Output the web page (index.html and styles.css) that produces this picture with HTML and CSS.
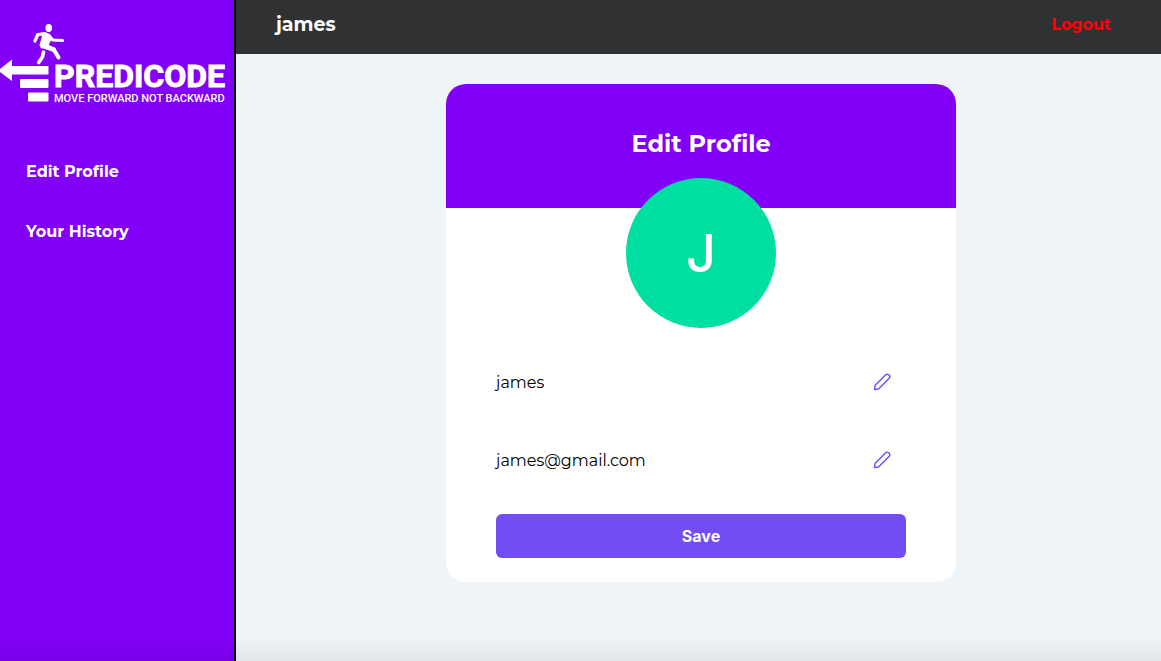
FILE: index.html
```html
<!DOCTYPE html>
<html lang="en">
<head>
<meta charset="utf-8">
<meta name="viewport" content="width=device-width, initial-scale=1">
<title>Edit Profile - Predicode</title>
<link rel="stylesheet" href="styles.css">
</head>
<body>
<div class="app">
  <aside class="sidebar">
    <svg class="logo" viewBox="0 0 234 110" role="img" aria-label="Predicode, move forward not backward">
      <g fill="#fff">
        <ellipse cx="48.700" cy="28" rx="3.300" ry="4"/>
        <path d="M-2 70.500 12 59.500V66H48.500V74.500H12V81Z"/>
        <rect x="20" y="79" width="28.500" height="9" rx="1"/>
        <rect x="28" y="92.500" width="20.500" height="9" rx="1"/>
        <path d="M39 33 45 32 50.500 34.500 52.500 38 49 44 50 47 41 48.500 39.500 45 42 36Z"/>
      </g>
      <g fill="none" stroke="#fff" stroke-linecap="round" stroke-linejoin="round">
        <path stroke-width="3.200" d="M43 34 37.800 34.500 34.900 41M49 36.500 53 40 62.500 40.500"/>
        <path stroke-width="5" d="M43.500 46 53.500 49.500"/>
        <path stroke-width="4" d="M54 50 58.500 57.500"/>
        <path stroke-width="3.700" d="M43.500 52 42.500 57 38.700 62.500"/>
      </g>
      <text class="logo-name" x="54" y="87">PREDICODE</text>
      <text class="logo-tagline" x="54" y="102">MOVE FORWARD NOT BACKWARD</text>
    </svg>
    <nav class="menu">
      <a class="menu-link" href="#profile">Edit Profile</a>
      <a class="menu-link" href="#history">Your History</a>
    </nav>
  </aside>
  <div class="page">
    <header class="topbar">
      <span class="user">james</span>
      <a class="logout" href="#logout">Logout</a>
    </header>
    <main class="content">
      <form class="card" id="profile">
        <div class="card-head"><h1 class="card-title">Edit Profile</h1></div>
        <div class="avatar">J</div>
        <div class="fields">
          <div class="field">
            <input class="field-input" type="text" aria-label="Name" value="james">
            <button class="edit" type="button" aria-label="Edit name">
              <svg class="pencil" viewBox="0 0 18 18"><path d="M1.500 16.500 2 12.500 12.500 2A2.300 2.300 0 0 1 16 5.500L5.500 16Z"/></svg>
            </button>
          </div>
          <div class="field">
            <input class="field-input" type="email" aria-label="Email" value="james@gmail.com">
            <button class="edit" type="button" aria-label="Edit email">
              <svg class="pencil" viewBox="0 0 18 18"><path d="M1.500 16.500 2 12.500 12.500 2A2.300 2.300 0 0 1 16 5.500L5.500 16Z"/></svg>
            </button>
          </div>
        </div>
        <button class="save" type="submit">Save</button>
      </form>
    </main>
  </div>
</div>
</body>
</html>
```
FILE: styles.css
```css
* { box-sizing: border-box; }

body {
  margin: 0;
  font-family: Montserrat, Inter, sans-serif;
  font-size: 16px;
  background: #eff4f8;
}

.app {
  display: flex;
  min-height: 100vh;
}

.app::after {
  content: "";
  position: fixed;
  inset: auto 0 0 0;
  height: 24px;
  background: linear-gradient(transparent, rgba(0, 0, 0, 0.06));
  pointer-events: none;
}

.sidebar {
  flex: 0 0 236px;
  background: #8200f7;
  border-right: 2px solid #000;
}

.logo {
  display: block;
  width: 100%;
}

.logo-name {
  font: bold 32px Roboto, sans-serif;
  fill: #fff;
  stroke: #fff;
  stroke-width: 1px;
}

.logo-tagline {
  font: 500 11px Roboto, sans-serif;
  fill: #fff;
}

.menu {
  display: flex;
  flex-direction: column;
  gap: 40px;
  padding: 52px 26px;
}

.menu-link {
  color: #fff;
  font-weight: 700;
  line-height: 20px;
  text-decoration: none;
}

.page {
  flex: 1;
  min-width: 0;
}

.topbar {
  display: flex;
  align-items: center;
  justify-content: space-between;
  padding: 13px 50px 17px 40px;
  line-height: 24px;
  font-weight: 700;
  background: #303133;
}

.user {
  color: #fff;
  font-size: 19px;
}

.logout {
  color: #ff0009;
  text-decoration: none;
}

.content {
  padding: 30px 0 30px 5px;
}

.card {
  display: flex;
  flex-direction: column;
  max-width: 510px;
  margin: 0 auto;
  padding-bottom: 24px;
  border-radius: 20px;
  background: #fff;
}

.card-head {
  padding: 45px 20px 49px;
  border-radius: 20px 20px 0 0;
  background: #8200f7;
}

.card-title {
  margin: 0;
  color: #fff;
  font-size: 24px;
  line-height: 30px;
  text-align: center;
}

.avatar {
  display: grid;
  place-items: center;
  align-self: center;
  width: 150px;
  height: 150px;
  margin-top: -30px;
  border-radius: 50%;
  background: #00dfa2;
  color: #fff;
  font: 500 52px Inter, sans-serif;
}

.fields {
  display: grid;
  gap: 38px;
  padding: 34px 65px 34px 48px;
}

.field {
  display: flex;
  align-items: center;
  height: 40px;
}

.field-input {
  flex: 1;
  min-width: 0;
  padding: 2px 0 0;
  border: 0;
  outline: 0;
  background: none;
  color: #000;
  font: 16px/24px Montserrat, Inter, sans-serif;
  text-indent: 2px;
}

.edit {
  padding: 0;
  border: 0;
  background: none;
  cursor: pointer;
}

.pencil {
  display: block;
  width: 18px;
  height: 18px;
  fill: none;
  stroke: #714df3;
  stroke-width: 1.4;
  stroke-linejoin: round;
}

.save {
  height: 44px;
  margin: 0 50px;
  border: 0;
  border-radius: 6px;
  background: #714df3;
  color: #fff;
  font: 700 16px Inter, sans-serif;
  cursor: pointer;
}
```
